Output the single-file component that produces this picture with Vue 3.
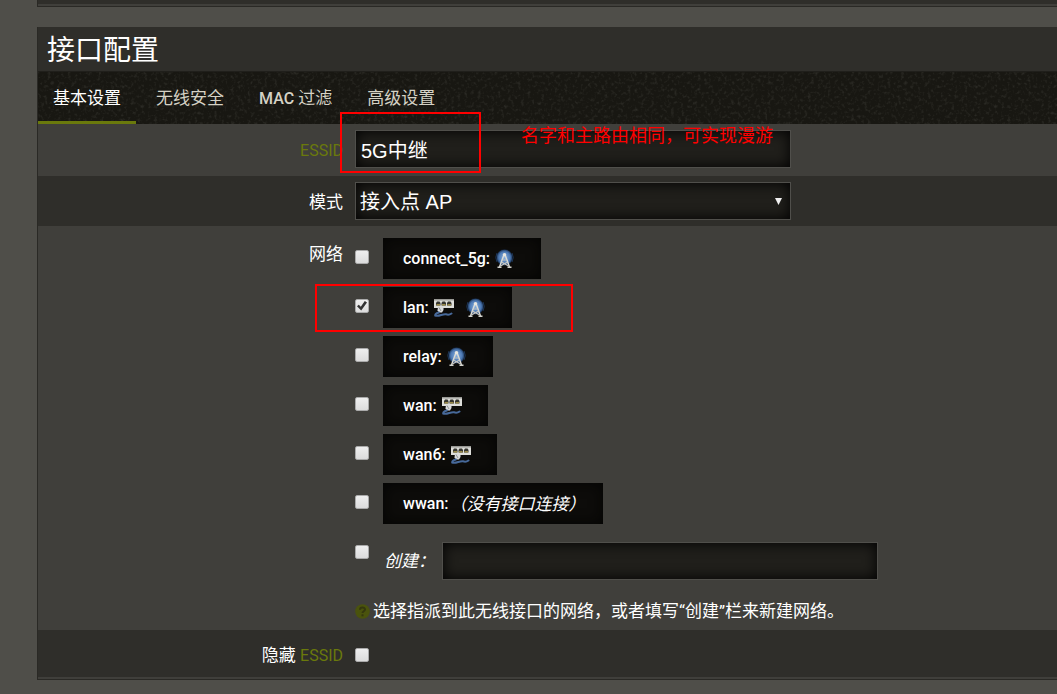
<script setup>
import { ref } from 'vue'

const tabs = [
  { text: '基本设置' },
  { text: '无线安全' },
  { latin: 'MAC', text: ' 过滤' },
  { text: '高级设置' },
]
const active = ref(0)
const essid = ref('5G中继')
const mode = ref('ap')
const hidden = ref(false)
const createOn = ref(false)
const createName = ref('')
const networks = ref([
  { name: 'connect_5g', icons: ['wifi'], on: false },
  { name: 'lan', icons: ['eth', 'wifi'], on: true, marked: true },
  { name: 'relay', icons: ['wifi'], on: false },
  { name: 'wan', icons: ['eth'], on: false },
  { name: 'wan6', icons: ['eth'], on: false },
  { name: 'wwan', icons: [], on: false },
])
</script>

<template>
  <div class="page">
    <svg class="defs" aria-hidden="true">
      <defs>
        <radialGradient id="globe">
          <stop offset="0" stop-color="#86b0e2" />
          <stop offset="0.7" stop-color="#4c78b2" />
          <stop offset="0.88" stop-color="#2c4c78" />
          <stop offset="1" stop-color="#101b2c" />
        </radialGradient>
        <symbol id="wifi" viewBox="0 0 20 20">
          <circle cx="9.5" cy="8.5" r="8.2" fill="url(#globe)" />
          <path d="M2 4Q-.5 8.500 2 13M17 4Q19.500 8.500 17 13" fill="none" stroke="#1e3657" stroke-width="1" />
          <path d="M8.700 6.500 4.500 18M10.300 6.500 14.500 18" stroke="#dcdcd6" stroke-width="1.500" />
          <path d="M7.500 11H11.500M6.500 13 13.500 17M12.500 13 5.500 17" stroke="#c4c5c2" stroke-width="1.200" />
          <path d="M2.500 18.200H6.500M12.500 18.200H16.500" stroke="#d2d2cc" stroke-width="1.500" />
          <circle cx="9.500" cy="5.800" r="1.800" fill="#e8e7e0" />
        </symbol>
        <symbol id="eth" viewBox="0 0 20 20">
          <rect x="0" y="1" width="20" height="9" fill="#dededa" />
          <rect x="0" y="1" width="20" height="1.500" fill="#9a9a96" />
          <g v-for="x in [2, 7.5, 13]" :key="x">
            <path :d="`M${x} 7.500V5L${x + 1} 3.500H${x + 3.5}L${x + 4.5} 5V7.500Z`" fill="#35352f" />
            <rect :x="x + 0.5" y="6" width="3.500" height="1.500" fill="#9a8a48" />
          </g>
          <path d="M4 9H9.500V12L8 14.500H5L3.500 12.500Z" fill="#d9dadb" />
          <path d="M5 9.500 7 13" stroke="#8f9496" stroke-width="1" />
          <path d="M5 14.500C2.500 15 1 16 1.200 17.500C4.500 19 9 15.500 12 16.300C14 17 16 16.600 17.500 15.500" fill="none" stroke="#47699a" stroke-width="2" stroke-linecap="round" />
        </symbol>
      </defs>
    </svg>

    <div class="previous"></div>

    <section class="panel">
      <h2>接口配置</h2>

      <nav class="tabs">
        <svg class="grain" aria-hidden="true">
          <filter id="grain" x="0" y="0" width="100%" height="100%">
            <feTurbulence type="fractalNoise" baseFrequency="0.3" numOctaves="2" seed="4" />
            <feColorMatrix values="0 0 0 0 0.5  0 0 0 0 0.5  0 0 0 0 0.45  1.600 0 0 0 -0.8" />
          </filter>
          <rect width="100%" height="100%" filter="url(#grain)" />
        </svg>
        <a v-for="(t, i) in tabs" :key="t.text" href="#" :class="{ active: i === active }" @click.prevent="active = i"><b v-if="t.latin">{{ t.latin }}</b>{{ t.text }}</a>
      </nav>

      <div class="row essid">
        <label class="name" for="essid"><abbr>ESSID</abbr></label>
        <div class="field">
          <input id="essid" v-model="essid" class="box" type="text" />
          <span class="mark mark-essid"></span>
          <span class="note">名字和主路由相同，可实现漫游</span>
        </div>
      </div>

      <div class="row alt">
        <label class="name" for="mode">模式</label>
        <div class="field">
          <div class="select">
            <select id="mode" v-model="mode" class="box">
              <option value="ap">接入点 AP</option>
            </select>
          </div>
        </div>
      </div>

      <div class="row network">
        <span id="network-label" class="name">网络</span>
        <div class="field">
          <ul class="options" aria-labelledby="network-label">
            <li v-for="n in networks" :key="n.name">
              <input :id="'net-' + n.name" v-model="n.on" type="checkbox" />
              <label class="badge" :for="'net-' + n.name">
                <span>{{ n.name }}:</span>
                <span v-if="n.icons.length" class="icons">
                  <svg v-for="i in n.icons" :key="i" aria-hidden="true"><use :href="'#' + i" /></svg>
                </span>
                <em v-else>（没有接口连接）</em>
              </label>
              <span v-if="n.marked" class="mark mark-lan"></span>
            </li>
          </ul>
          <div class="create">
            <input id="create-on" v-model="createOn" type="checkbox" aria-label="创建" />
            <label for="create-name"><em>创建：</em></label>
            <input id="create-name" v-model="createName" class="box" type="text" />
          </div>
          <p class="help">
            <svg viewBox="0 0 15 15" aria-hidden="true">
              <circle cx="7.500" cy="7.500" r="7.300" fill="#4a530d" />
              <path d="M5 5.800C5 2.700 10 2.700 10 5.600C10 7.300 7.500 7.200 7.500 9" fill="none" stroke="#34370f" stroke-width="2" />
              <rect x="6.500" y="10.300" width="2" height="2" fill="#34370f" />
            </svg>
            <span>选择指派到此无线接口的网络，或者填写“创建”栏来新建网络。</span>
          </p>
        </div>
      </div>

      <div class="row alt hide">
        <label class="name" for="hidden">隐藏 <abbr>ESSID</abbr></label>
        <div class="field"><input id="hidden" v-model="hidden" type="checkbox" /></div>
      </div>
    </section>
  </div>
</template>

<style>
body {
  margin: 0;
  background: #4f4e49;
}
</style>

<style scoped>
* {
  box-sizing: border-box;
}
.page {
  min-height: 100vh;
  padding-left: 37px;
  overflow: hidden;
  background: #4f4e49;
  color: #fff;
  font-family: Roboto, "Noto Sans CJK SC", sans-serif;
  font-size: 17px;
  line-height: 24px;
}
.defs {
  position: absolute;
  width: 0;
  height: 0;
}
.previous {
  height: 7px;
  margin-bottom: 20px;
  background: #2f2e2a;
  border-left: 1px solid #2a2925;
  border-bottom: 1px solid #2a2925;
  box-shadow: inset 0 -2px #403f3b;
}
.panel {
  padding-bottom: 2px;
  background: #403f3b;
  border: 1px solid #2a2925;
  border-width: 0 0 1px 1px;
}
h2 {
  margin: 0;
  padding: 3px 9px 0;
  background: #2f2e2a;
  font-size: 28px;
  font-weight: 400;
  line-height: 41px;
}
.tabs {
  position: relative;
  display: flex;
  gap: 5px;
  height: 53px;
  background: #181712;
  border-top: 1px solid #201f1b;
}
.grain {
  position: absolute;
  inset: 0;
  width: 100%;
  height: 100%;
  opacity: 0.2;
}
.tabs a {
  position: relative;
  padding: 14px 15px 11px;
  border-bottom: 3px solid transparent;
  color: #d5d2c5;
  text-decoration: none;
}
.tabs a.active {
  border-color: #6a790c;
  color: #fff;
}
.tabs b {
  font-size: 16px;
  font-weight: 500;
}
.row {
  display: grid;
  grid-template-columns: 305px 1fr;
  column-gap: 12px;
  align-items: center;
  padding: 6px 0;
}
.row.essid {
  padding-bottom: 8px;
}
.row.alt {
  background: #2f2e2a;
}
.row.network {
  align-items: start;
  padding: 12px 0 7px;
}
.row.hide {
  min-height: 47px;
  padding-top: 8px;
}
.name {
  padding-top: 2px;
  text-align: right;
}
.network > .name {
  padding-top: 4px;
}
abbr {
  color: #6a790c;
  font-size: 16px;
}
.field {
  position: relative;
  min-width: 0;
}
.box {
  display: block;
  width: 436px;
  max-width: 100%;
  height: 38px;
  padding: 0 5px;
  border: 1px solid #504f4b;
  border-radius: 0;
  background: #201f1b;
  box-shadow: inset 0 0 14px #000;
  color: #fff;
  font-family: "Liberation Sans", "Noto Sans CJK SC", sans-serif;
  font-size: 20px;
  outline: 0;
  appearance: none;
}
select.box {
  padding: 2px 4px 0;
}
.select {
  position: relative;
  width: 436px;
  max-width: 100%;
}
.select::after {
  content: "";
  position: absolute;
  top: 16px;
  right: 9px;
  width: 7px;
  height: 7px;
  background: #f0f0f0;
  clip-path: polygon(0 0, 100% 0, 50% 100%);
  pointer-events: none;
}
input[type="checkbox"] {
  display: block;
  flex: none;
  position: relative;
  width: 14px;
  height: 14px;
  margin: 0;
  border: 1px solid #aaa;
  border-radius: 2px;
  background: linear-gradient(#eee, #dcdcdc);
  appearance: none;
}
input[type="checkbox"]:checked::after {
  content: "";
  position: absolute;
  inset: 1px;
  background: #333;
  clip-path: polygon(0 52%, 18% 38%, 38% 58%, 78% 0, 100% 14%, 42% 96%);
}
.options {
  display: grid;
  gap: 8px;
  margin: 0;
  padding: 0;
  list-style: none;
}
.options li {
  position: relative;
  display: flex;
  align-items: center;
  gap: 14px;
}
.options input[type="checkbox"] {
  margin-bottom: 3px;
}
.badge {
  display: flex;
  align-items: center;
  gap: 5px;
  height: 41px;
  padding: 0 26px 0 20px;
  background: #0d0c0a;
  box-shadow: inset 0 0 14px #040403;
  font-size: 16px;
  font-weight: 500;
}
.badge em {
  margin: 0 -9px 0 -4px;
  font-size: 17px;
  font-weight: 400;
}
.icons {
  display: flex;
  gap: 12px;
}
.icons svg {
  width: 20px;
  height: 20px;
}
.create {
  display: flex;
  margin-top: 18px;
}
.create input[type="checkbox"] {
  margin-top: 3px;
}
.create label {
  width: 73px;
  padding: 7px 0 0 15px;
}
.help {
  display: flex;
  align-items: center;
  gap: 3px;
  margin: 19px 0 0;
}
.help svg {
  width: 15px;
  height: 15px;
}
.mark {
  position: absolute;
  border: 2px solid #f00;
  pointer-events: none;
}
.mark-essid {
  top: -18px;
  left: -15px;
  width: 141px;
  height: 61px;
}
.mark-lan {
  top: -3px;
  left: -40px;
  width: 258px;
  height: 48px;
}
.note {
  position: absolute;
  top: -6px;
  left: 166px;
  color: #f00;
  font-size: 18px;
  white-space: nowrap;
  pointer-events: none;
}
</style>
